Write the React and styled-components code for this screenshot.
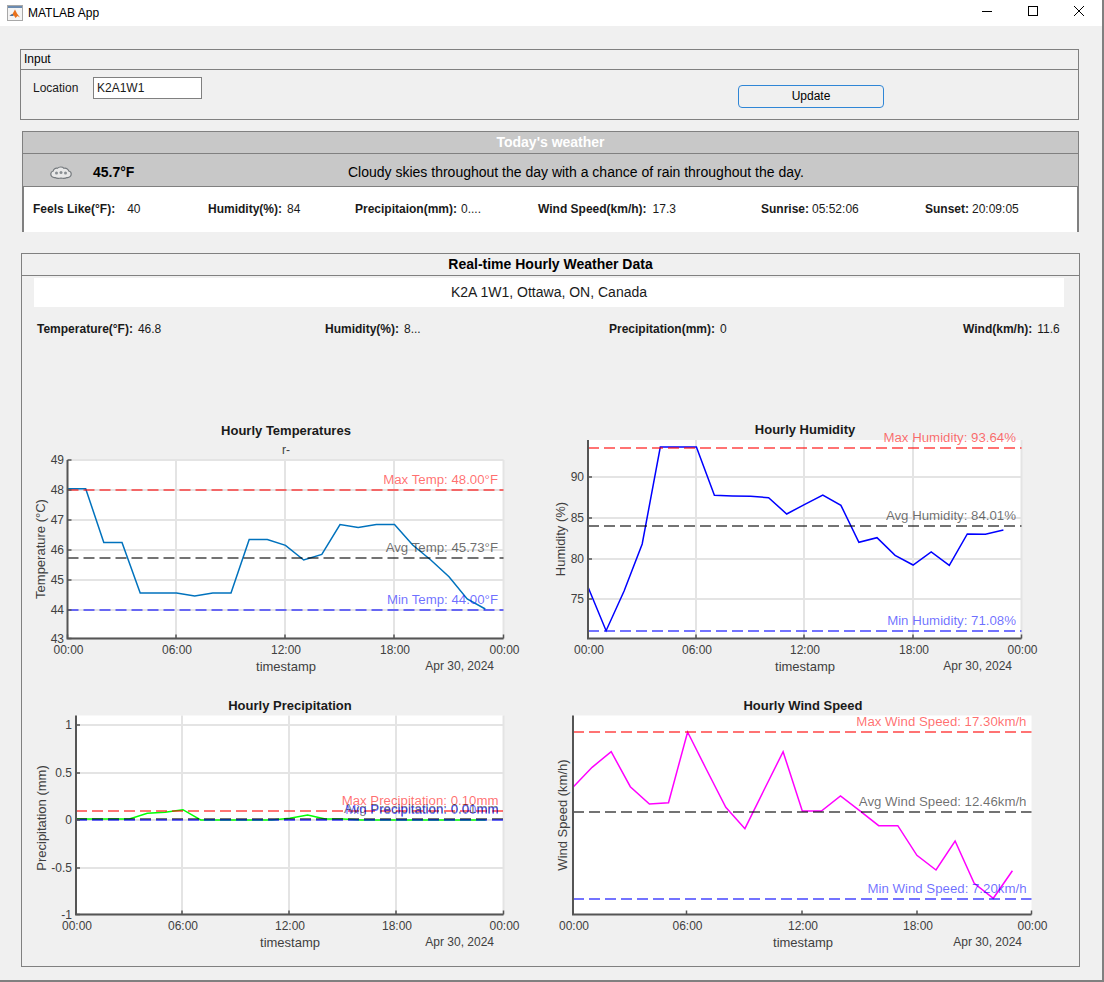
import React from 'react';
import styled, { createGlobalStyle } from 'styled-components';

const FONT = '"Liberation Sans", Arial, sans-serif';
const EDGE = '#808080';
const RED = '#ff0000';
const BLUE = '#0000ff';
const BLACK = '#000000';

const GlobalStyle = createGlobalStyle`
  html, body {
    margin: 0;
    background: #f0f0f0;
    font-family: ${FONT};
    font-size: 12px;
    color: #1a1a1a;
  }
`;

const Frame = styled.div`
  position: relative;
  box-sizing: border-box;
  width: 1104px;
  height: 982px;
  overflow: hidden;
  border-right: 2px solid ${EDGE};
  border-bottom: 2px solid ${EDGE};
  background: #f0f0f0;
`;

const EdgeAccent = styled.div`
  position: absolute;
  top: 23px;
  right: -2px;
  width: 2px;
  height: 27px;
  background: #1c3c5e;
`;

const TitleBar = styled.header`
  display: flex;
  align-items: center;
  height: 26px;
  background: #fff;
  padding-left: 7px;
`;

const TitleText = styled.span`
  margin-left: 5px;
  font-size: 12px;
  color: #000;
`;

const WindowControls = styled.div`
  display: flex;
  margin-left: auto;
  align-self: flex-start;
`;

const WindowButton = styled.div`
  display: flex;
  align-items: center;
  justify-content: center;
  width: 46px;
  height: 21px;
`;

const Panel = styled.section`
  box-sizing: border-box;
  width: ${p => p.$width}px;
  margin-left: ${p => p.$left}px;
  margin-top: ${p => p.$top}px;
  border: 1px solid ${EDGE};
`;

const InputHeader = styled.div`
  box-sizing: border-box;
  height: 20px;
  line-height: 18px;
  padding-left: 3px;
  border-bottom: 1px solid ${EDGE};
  color: #000;
`;

const InputBody = styled.div`
  box-sizing: border-box;
  display: flex;
  align-items: flex-start;
  height: 49px;
  padding: 7px 0 0 12px;
`;

const FieldLabel = styled.label`
  width: 60px;
  line-height: 22px;
  color: #1a1a1a;
`;

const TextField = styled.div`
  box-sizing: border-box;
  width: 109px;
  height: 22px;
  line-height: 20px;
  padding-left: 3px;
  background: #fff;
  border: 1px solid ${EDGE};
`;

const UpdateButton = styled.button`
  box-sizing: border-box;
  width: 146px;
  height: 23px;
  margin: 8px 0 0 536px;
  padding: 0 0 1px;
  background: #f0f0f0;
  border: 1px solid #2f86d6;
  border-radius: 4px;
  font: 12px ${FONT};
  color: #000;
`;

const TodayPanel = styled(Panel)`
  height: 101px;
  border-bottom: 0;
`;

const TodayTitle = styled.div`
  box-sizing: border-box;
  height: 22px;
  line-height: 21px;
  text-align: center;
  background: #c8c8c8;
  border-bottom: 1px solid ${EDGE};
  font-size: 14px;
  font-weight: 700;
  color: #fff;
`;

const SummaryRow = styled.div`
  box-sizing: border-box;
  display: grid;
  grid-template-columns: 70px 255px 1fr;
  align-items: center;
  height: 33px;
  padding-top: 4px;
  background: #c8c8c8;
  border-bottom: 1px solid ${EDGE};
  font-size: 14px;
  color: #000;
`;

const IconSlot = styled.div`
  display: flex;
  padding-left: 27px;
`;

const TempText = styled.strong`
  font-weight: 700;
`;

const StatsStrip = styled.div`
  box-sizing: border-box;
  display: grid;
  grid-template-columns: 175px 147px 183px 223px 164px 1fr;
  align-items: center;
  height: 45px;
  padding: 0 0 2px 9px;
  background: #fff;
  border-left: 1px solid ${EDGE};
  border-right: 1px solid ${EDGE};
`;

const Stat = styled.div`
  display: flex;
  gap: ${p => p.$gap || 5}px;
  white-space: nowrap;
  color: #1a1a1a;
`;

const StatLabel = styled.b`
  font-weight: 700;
`;

const HourlyHeader = styled.div`
  box-sizing: border-box;
  height: 22px;
  line-height: 21px;
  text-align: center;
  border-bottom: 1px solid ${EDGE};
  font-size: 14px;
  font-weight: 700;
  color: #000;
`;

const LocationBand = styled.div`
  height: 29px;
  line-height: 28px;
  margin: 2px 15px 0 12px;
  text-align: center;
  background: #fff;
  font-size: 14px;
  color: #1a1a1a;
`;

const LiveStats = styled.div`
  display: grid;
  grid-template-columns: 288px 284px 354px 1fr;
  height: 14px;
  margin-top: 15px;
  padding-left: 15px;
`;

const ChartGrid = styled.div`
  display: grid;
  grid-template-columns: 518px 539px;
  grid-auto-rows: 270px;
  margin-top: 84px;
  padding-bottom: 6px;
`;

const ChartSvg = styled.svg`
  display: block;
  font-family: ${FONT};
  overflow: hidden;
`;

const Tick = styled.text`
  font-size: 12px;
  fill: #404040;
`;

const AxisName = styled.text`
  font-size: 13px;
  fill: #404040;
`;

const ChartTitle = styled.text`
  font-size: 13px;
  font-weight: 700;
  fill: #1a1a1a;
`;

const RefLabel = styled.text`
  font-size: 13.25px;
  fill: ${p => p.$color};
  fill-opacity: 0.58;
`;

const HOUR_TICKS = ['00:00', '06:00', '12:00', '18:00', '00:00'];

// every chart is drawn in page pixels, the viewBox moves it into its grid cell
const charts = [
  {
    origin: [22, 420],
    plot: { left: 67.5, right: 503.5, top: 460, bottom: 638.5 },
    title: 'Hourly Temperatures', titleX: 286, titleY: 435,
    subtitle: 'r-',
    yName: 'Temperature (°C)', yNameX: 45, yNameY: 549,
    yTicks: [['49', 460], ['48', 490], ['47', 520], ['46', 550], ['45', 580], ['44', 610], ['43', 638.5]],
    tickEnd: 64,
    xTicks: [176, 285, 394],
    xLabelShift: 1,
    xNameX: 286, xBase: 654, nameBase: 671, dateEnd: 494,
    color: '#0072bd',
    series: [488.8, 488.8, 542.4, 542.4, 593.1, 593.1, 593.1, 596, 593.1, 593.1, 539.5, 539.5, 545.4, 560, 554.4, 524.6, 527.6, 524.6, 524.6, 545, 560, 576.7, 599, 609],
    labelEnd: 498,
    refs: [
      { text: 'Max Temp: 48.00°F', y: 490, base: 484, color: RED },
      { text: 'Avg Temp: 45.73°F', y: 558, base: 552, color: BLACK },
      { text: 'Min Temp: 44.00°F', y: 610, base: 604, color: BLUE },
    ],
    frame: true,
  },
  {
    origin: [540, 420],
    plot: { left: 588, right: 1021.5, top: 440, bottom: 638.5 },
    title: 'Hourly Humidity', titleX: 805, titleY: 434,
    yName: 'Humidity (%)', yNameX: 565, yNameY: 539,
    yTicks: [['90', 477], ['85', 518], ['80', 559], ['75', 599]],
    tickEnd: 584,
    xTicks: [696, 804, 913],
    xLabelShift: 1,
    xNameX: 805, xBase: 654, nameBase: 671, dateEnd: 1012,
    color: '#0000ff',
    series: [587, 630.7, 591, 544, 447, 447, 447, 495.3, 496, 496.3, 497.7, 514, 504.3, 495, 505.3, 542.3, 537.7, 555.3, 565, 552, 565.3, 534, 534.3, 530],
    labelEnd: 1016,
    refs: [
      { text: 'Max Humidity: 93.64%', y: 448, base: 442, color: RED },
      { text: 'Avg Humidity: 84.01%', y: 526, base: 520, color: BLACK },
      { text: 'Min Humidity: 71.08%', y: 631, base: 625, color: BLUE },
    ],
    frame: true,
  },
  {
    origin: [22, 690],
    plot: { left: 76, right: 503.5, top: 715.5, bottom: 914.5 },
    title: 'Hourly Precipitation', titleX: 290, titleY: 710,
    yName: 'Precipitation (mm)', yNameX: 46, yNameY: 818,
    yTicks: [['1', 725], ['0.5', 773], ['0', 820], ['-0.5', 868], ['-1', 914.5]],
    tickEnd: 72,
    xTicks: [182, 289, 396],
    xLabelShift: 1,
    xNameX: 290, xBase: 930, nameBase: 947, dateEnd: 494,
    color: '#00ff00',
    series: [819, 819, 819, 819, 813.3, 812.3, 809.7, 820, 820, 820, 820, 820, 818.3, 815, 819, 819, 820, 820, 820, 820, 820, 820, 820, 820],
    labelEnd: 498.5,
    refs: [
      { text: 'Max Precipitation: 0.10mm', y: 811, base: 805, color: RED },
      { text: 'Avg Precipitation: 0.01mm', y: 819, base: 813, color: BLACK },
      { text: 'Min Precipitation: 0.00mm', y: 820, base: 814, color: BLUE },
    ],
    frame: true,
  },
  {
    origin: [540, 690],
    plot: { left: 573, right: 1031.5, top: 715.5, bottom: 914.5 },
    title: 'Hourly Wind Speed', titleX: 803, titleY: 710,
    yName: 'Wind Speed (km/h)', yNameX: 567, yNameY: 815,
    yTicks: [],
    tickEnd: 569,
    xTicks: [686.5, 802, 917],
    xLabelShift: 1,
    xNameX: 803, xBase: 930, nameBase: 947, dateEnd: 1022,
    color: '#ff00ff',
    series: [787.3, 767.3, 751.7, 786.7, 804, 802.7, 732, 770, 807.3, 828.7, 790, 751.7, 811, 811, 796, 810.7, 825.7, 825.7, 855.3, 870, 841, 883.3, 898.3, 870.7],
    labelEnd: 1026.5,
    refs: [
      { text: 'Max Wind Speed: 17.30km/h', y: 732, base: 726, color: RED },
      { text: 'Avg Wind Speed: 12.46km/h', y: 812, base: 806, color: BLACK },
      { text: 'Min Wind Speed: 7.20km/h', y: 899, base: 893, color: BLUE },
    ],
    frame: false,
  },
];

const CHART_W = { 22: 518, 540: 539 };
const GRID = '#e4e4e4';
const AXIS = '#555555';

const LineChart = ({ chart }) => {
  const { origin, plot, frame } = chart;
  const width = CHART_W[origin[0]];
  const hour = (plot.right - plot.left) / 24;
  const points = chart.series.map((y, i) => `${(plot.left + i * hour).toFixed(1)},${y}`).join(' ');
  const allX = [plot.left, ...chart.xTicks, plot.right];

  return (
    <ChartSvg width={width} height={270} viewBox={`${origin[0]} ${origin[1]} ${width} 270`}>
      <rect x={plot.left} y={plot.top} width={plot.right - plot.left} height={plot.bottom - plot.top} fill="#fff" />

      {frame && chart.xTicks.map(x => (
        <line key={x} x1={x} x2={x} y1={plot.top} y2={plot.bottom} stroke={GRID} strokeWidth="2" />
      ))}
      {frame && chart.yTicks.map(([label, y]) => (
        <line key={label} x1={plot.left} x2={plot.right} y1={y} y2={y} stroke={GRID} strokeWidth="2" />
      ))}
      {frame && <line x1={plot.right} x2={plot.right} y1={plot.top} y2={plot.bottom} stroke={GRID} strokeWidth="2" />}

      <polyline points={points} fill="none" stroke={chart.color} strokeWidth="1.5" />

      {chart.refs.map(ref => (
        <line key={ref.text} x1={plot.left} x2={plot.right} y1={ref.y} y2={ref.y}
              stroke={ref.color} strokeOpacity="0.55" strokeWidth="2" strokeDasharray="11 5" />
      ))}

      <path
        d={`M${plot.left} ${plot.top}V${plot.bottom}H${plot.right}`}
        fill="none" stroke={AXIS} strokeWidth="2"
      />
      {allX.map((x, i) => (
        <line key={i} x1={x} x2={x} y1={plot.bottom} y2={plot.bottom - 4} stroke={AXIS} strokeWidth="1.5" />
      ))}
      {chart.yTicks.map(([label, y]) => (
        <line key={label} x1={plot.left} x2={plot.left + 4} y1={y} y2={y} stroke={AXIS} strokeWidth="1.5" />
      ))}

      {chart.refs.map(ref => (
        <RefLabel key={ref.text} x={chart.labelEnd} y={ref.base} textAnchor="end" $color={ref.color}>{ref.text}</RefLabel>
      ))}

      {chart.yTicks.map(([label, y]) => (
        <Tick key={label} x={chart.tickEnd} y={y + 4} textAnchor="end">{label}</Tick>
      ))}
      {allX.map((x, i) => (
        <Tick key={i} x={x + chart.xLabelShift} y={chart.xBase} textAnchor="middle">{HOUR_TICKS[i]}</Tick>
      ))}

      <ChartTitle x={chart.titleX} y={chart.titleY} textAnchor="middle">{chart.title}</ChartTitle>
      {chart.subtitle && <Tick x={chart.titleX} y={454} textAnchor="middle">{chart.subtitle}</Tick>}
      <AxisName x={chart.xNameX} y={chart.nameBase} textAnchor="middle">timestamp</AxisName>
      <Tick x={chart.dateEnd} y={chart.nameBase - 1} textAnchor="end">Apr 30, 2024</Tick>
      <AxisName
        x={chart.yNameX} y={chart.yNameY} textAnchor="middle"
        transform={`rotate(-90 ${chart.yNameX} ${chart.yNameY})`}
      >
        {chart.yName}
      </AxisName>
    </ChartSvg>
  );
};

const MatlabIcon = () => (
  <svg width="16" height="16" viewBox="0 0 16 16">
    <rect x="0.5" y="0.5" width="15" height="15" fill="#f4f4f4" stroke="#a8a8a8" />
    <rect x="1" y="1" width="14" height="2" fill="#6b8bb0" />
    <path d="M2.500 10.500 5.500 9 8 4.500l2 4 3 4-2.500-1.500-2 2-1.500-2.500-2 .5z" fill="#e8701a" />
    <path d="M2.500 10.500 5.500 9 6.500 10.500 5 11z" fill="#2f6fb0" />
  </svg>
);

const CloudIcon = () => (
  <svg width="22" height="13" viewBox="0 0 22 13">
    <path
      d="M5 11.500C2.500 11.800.7 10 .8 7.800.9 6.300 1.900 5.300 3.200 5 3.500 3 5.500 1.700 7.500 2.300 8.500.7 12.500.5 14 2.300 16 1.700 18.300 3 18.700 5 20.100 5.300 21.200 6.300 21.200 7.800 21.300 10 19.500 11.800 17 11.500 15.500 12.500 13 12.500 11 12 9 12.500 6.500 12.500 5 11.500z"
      fill="#e8e8e8" stroke="#74797d" strokeWidth="1.2"
    />
    <circle cx="6.500" cy="7" r="1.500" fill="#8a8f93" />
    <circle cx="11" cy="6.500" r="1.500" fill="#8a8f93" />
    <circle cx="15.500" cy="7" r="1.500" fill="#8a8f93" />
  </svg>
);

const MinimizeIcon = () => (
  <svg width="10" height="10" viewBox="0 0 10 10"><path d="M0 5.500H10" stroke="#000" /></svg>
);

const MaximizeIcon = () => (
  <svg width="10" height="10" viewBox="0 0 10 10"><rect x="0.500" y="0.500" width="9" height="9" fill="none" stroke="#000" /></svg>
);

const CloseIcon = () => (
  <svg width="10" height="10" viewBox="0 0 10 10"><path d="M0 0 10 10M10 0 0 10" stroke="#000" /></svg>
);

const todayStats = [
  ['Feels Like(°F):', '40', 12],
  ['Humidity(%):', '84', 5],
  ['Precipitaion(mm):', '0....', 4],
  ['Wind Speed(km/h):', '17.3', 6],
  ['Sunrise:', '05:52:06', 3],
  ['Sunset:', '20:09:05', 3],
];

const liveStats = [
  ['Temperature(°F):', '46.8'],
  ['Humidity(%):', '8...'],
  ['Precipitation(mm):', '0'],
  ['Wind(km/h):', '11.6'],
];

export default function App() {
  return (
    <Frame>
      <GlobalStyle />
      <EdgeAccent />
      <TitleBar>
        <MatlabIcon />
        <TitleText>MATLAB App</TitleText>
        <WindowControls>
          <WindowButton><MinimizeIcon /></WindowButton>
          <WindowButton><MaximizeIcon /></WindowButton>
          <WindowButton><CloseIcon /></WindowButton>
        </WindowControls>
      </TitleBar>

      <Panel $left={20} $top={23} $width={1059}>
        <InputHeader>Input</InputHeader>
        <InputBody>
          <FieldLabel>Location</FieldLabel>
          <TextField>K2A1W1</TextField>
          <UpdateButton type="button">Update</UpdateButton>
        </InputBody>
      </Panel>

      <TodayPanel $left={22} $top={11} $width={1057}>
        <TodayTitle>Today's weather</TodayTitle>
        <SummaryRow>
          <IconSlot><CloudIcon /></IconSlot>
          <TempText>45.7°F</TempText>
          <span>Cloudy skies throughout the day with a chance of rain throughout the day.</span>
        </SummaryRow>
        <StatsStrip>
          {todayStats.map(([label, value, gap]) => (
            <Stat key={label} $gap={gap}><StatLabel>{label}</StatLabel><span>{value}</span></Stat>
          ))}
        </StatsStrip>
      </TodayPanel>

      <Panel $left={21} $top={21} $width={1059}>
        <HourlyHeader>Real-time Hourly Weather Data</HourlyHeader>
        <LocationBand>K2A 1W1, Ottawa, ON, Canada</LocationBand>
        <LiveStats>
          {liveStats.map(([label, value]) => (
            <Stat key={label}><StatLabel>{label}</StatLabel><span>{value}</span></Stat>
          ))}
        </LiveStats>
        <ChartGrid>
          {charts.map(chart => <LineChart key={chart.title} chart={chart} />)}
        </ChartGrid>
      </Panel>
    </Frame>
  );
}
